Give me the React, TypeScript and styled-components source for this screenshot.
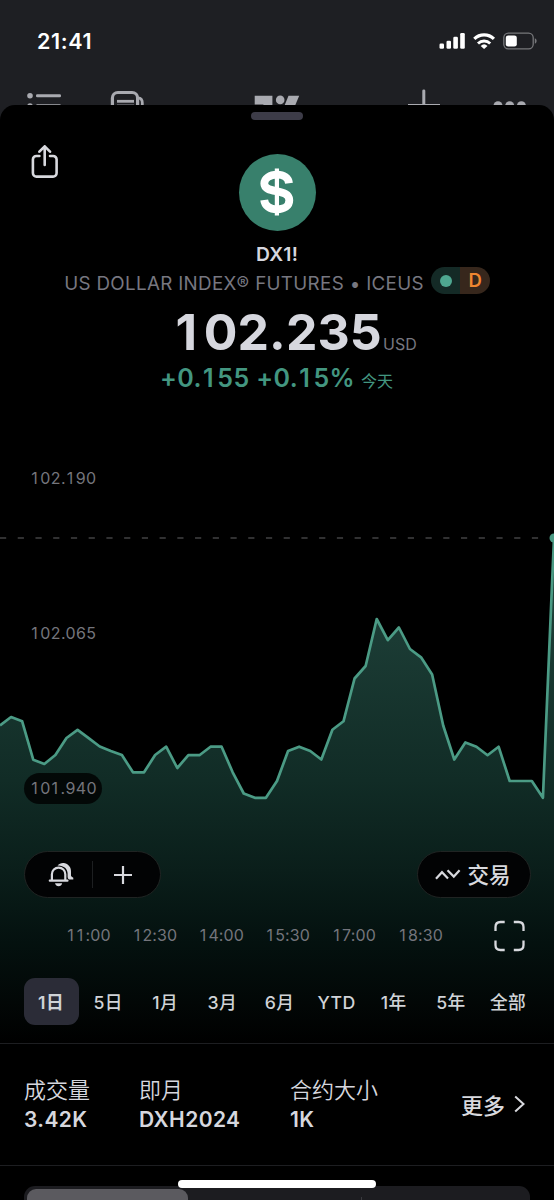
import React from "react";
import styled, { createGlobalStyle, css } from "styled-components";

const GlobalStyle = createGlobalStyle`
  * { box-sizing: border-box; }
  html, body { margin: 0; padding: 0; background: #1e1f23; }
  body {
    font-family: Inter, "Noto Sans CJK SC", sans-serif;
    -webkit-font-smoothing: antialiased;
    color: #d6d7de;
  }
`;

const Screen = styled.main`
  display: flex;
  flex-direction: column;
  width: 554px;
  height: 1200px;
  position: relative;
  overflow: hidden;
  background: #1e1f23;
`;

const StatusBar = styled.header`
  display: flex;
  align-items: center;
  justify-content: space-between;
  height: 82px;
  flex: none;
  padding: 0 17px 0 37px;
`;

const Clock = styled.time`
  color: #fff;
  font-size: 21.5px;
  font-weight: 600;
  line-height: 26px;
  letter-spacing: 0.6px;
`;

const BackToolbar = styled.nav`
  height: 23px;
  flex: none;
`;

const Sheet = styled.section`
  display: flex;
  flex-direction: column;
  flex: 1;
  min-height: 0;
  overflow: hidden;
  background: #000;
  border-radius: 15px 15px 0 0;
`;

const Grabber = styled.div`
  width: 52px;
  height: 8px;
  flex: none;
  margin: 7px auto 0;
  border-radius: 4px;
  background: #3d3c48;
`;

const HeroTop = styled.div`
  display: grid;
  grid-template-columns: 1fr 77px 1fr;
  align-items: start;
  height: 86px;
  flex: none;
  margin-top: 25px;
  padding: 0 30px;
`;

const IconButton = styled.button`
  display: flex;
  align-items: center;
  justify-content: center;
  padding: 0;
  border: 0;
  background: none;
  color: #d8d9de;
  justify-self: start;
`;

const Logo = styled.div`
  display: flex;
  align-items: center;
  justify-content: center;
  width: 77px;
  height: 77px;
  margin-top: 8.5px;
  border-radius: 50%;
  background: #38806c;
`;

const Symbol = styled.h1`
  flex: none;
  margin: 11px 0 0;
  font-size: 19.3px;
  font-weight: 600;
  line-height: 24px;
  text-align: center;
  letter-spacing: 0.2px;
`;

const NameRow = styled.div`
  display: flex;
  align-items: flex-start;
  justify-content: center;
  gap: 7px;
  height: 28px;
  flex: none;
  padding-top: 1px;
  color: #777780;
  font-size: 18.8px;
  line-height: 34px;
  white-space: nowrap;
`;

const Name = styled.span`
  letter-spacing: 0.33px;
`;

const StatusBadge = styled.span`
  display: flex;
  width: 59px;
  height: 27px;
  border-radius: 14px;
  overflow: hidden;
`;

const BadgeHalf = styled.span<{ $bg: string }>`
  display: flex;
  align-items: center;
  justify-content: center;
  flex: 1;
  background: ${(p) => p.$bg};
  color: #ef8630;
  font-size: 18.5px;
  font-weight: 600;
  line-height: 27px;
`;

const MarketDot = styled.i`
  width: 12px;
  height: 12px;
  border-radius: 50%;
  background: #4ea790;
`;

const One = styled.span`
  padding: 0 0.13em 0 0.05em;
`;

const PriceRow = styled.div`
  display: flex;
  align-items: baseline;
  height: 70px;
  flex: none;
  padding: 8px 0 0 173px;
`;

const Price = styled.strong`
  width: 210px;
  font-size: 50px;
  font-weight: 650;
  line-height: 60px;
  letter-spacing: 0.1px;
`;

const Currency = styled.span`
  color: #777780;
  font-size: 16px;
  letter-spacing: 0;
`;

const ChangeRow = styled.div`
  display: flex;
  align-items: baseline;
  height: 28px;
  flex: none;
  padding-left: 160px;
  color: #439680;
`;

const Change = styled.span`
  width: 201px;
  font-size: 25px;
  font-weight: 640;
  line-height: 28px;
  letter-spacing: 0.4px;
  white-space: nowrap;
`;

const Today = styled.span`
  font-size: 16px;
`;

const ChartPanel = styled.section`
  display: grid;
  height: 652px;
  flex: none;
  border-bottom: 1px solid #1d1e21;

  > * { grid-area: 1 / 1; }
`;

const ChartControls = styled.div`
  display: flex;
  flex-direction: column;
  min-width: 0;
  padding: 71px 23.5px 0;
`;

const Scale = styled.div`
  display: flex;
  flex-direction: column;
  align-items: flex-start;
  gap: 124px;
`;

const ScaleLabel = styled.span<{ $filled?: boolean }>`
  width: 78px;
  height: 31px;
  border-radius: 16px;
  padding-left: 7px;
  font-size: 16px;
  line-height: 31px;
  letter-spacing: 0.4px;
  color: #74757c;
  background: ${(p) => (p.$filled ? "rgba(0, 0, 0, 0.8)" : "transparent")};
`;

const ActionRow = styled.div`
  display: flex;
  justify-content: space-between;
  margin-top: 47px;
`;

const Pill = styled.div<{ $width: number; $inset: number }>`
  display: flex;
  align-items: center;
  width: ${(p) => p.$width}px;
  height: 47px;
  padding: 0 ${(p) => p.$inset}px;
  border: 1px solid #202423;
  border-radius: 24px;
  background: #020304;
  color: #d8d9de;
`;

const PillButton = styled.button`
  display: flex;
  align-items: center;
  justify-content: center;
  flex: 1;
  padding: 0;
  border: 0;
  background: none;
  color: inherit;
  font: 500 21.5px/45px Inter, "Noto Sans CJK SC", sans-serif;
`;

const TradeLabel = styled.span`
  padding: 1px 1px 0 0;
`;

const PillDivider = styled.i`
  width: 1px;
  height: 27px;
  background: #1d1f21;
`;

const TimeRow = styled.div`
  display: flex;
  align-items: center;
  justify-content: space-between;
  height: 32px;
  margin-top: 22px;
  padding: 0 6px 0 32px;
`;

const Times = styled.div`
  display: grid;
  grid-template-columns: repeat(6, 66.4px);
  color: #74757c;
  font-size: 16px;
  letter-spacing: 0.15px;
  line-height: 20px;
  padding-bottom: 2px;
  text-align: center;
`;

const Ranges = styled.div`
  display: flex;
  justify-content: space-between;
  width: 512px;
  margin-top: 26px;
`;

const Range = styled.button<{ $active?: boolean }>`
  width: 55px;
  height: 47px;
  padding: 0;
  border: 0;
  border-radius: 11px;
  background: none;
  color: #d0d3d7;
  font: 450 17.7px/49px Inter, "Noto Sans CJK SC", sans-serif;
  letter-spacing: 0.4px;
  white-space: nowrap;
  ${(p) =>
    p.$active &&
    css`
      background: #2b2c37;
      font-weight: 600;
    `}
`;

const Stats = styled.section`
  display: grid;
  grid-template-columns: 115px 151px 1fr auto;
  height: 122px;
  flex: none;
  padding: 31px 29px 0 24px;
  border-bottom: 1px solid #1d1e21;
`;

const StatLabel = styled.div`
  font-size: 22px;
  font-weight: 350;
  line-height: 30px;
`;

const StatValue = styled.div`
  font-size: 21px;
  font-weight: 600;
  line-height: 30px;
  letter-spacing: 0.4px;
`;

const More = styled.button`
  display: flex;
  align-items: center;
  gap: 9px;
  height: 58px;
  padding: 0;
  border: 0;
  background: none;
  color: #d8d9de;
  font: 500 22px/57px "Noto Sans CJK SC", sans-serif;
`;

const Segments = styled.div`
  display: flex;
  justify-content: space-between;
  height: 40px;
  flex: none;
  margin: 20px 24px 0;
  padding: 3px;
  border-radius: 11px;
  background: #1c1c20;
`;

const Segment = styled.div`
  width: 161px;
  border-radius: 9px;
  background: #5b5a5f;
`;

const SegmentDivider = styled.i`
  width: 1px;
  height: 20px;
  margin: 8px 165px 0 0;
  background: #3a3a3f;
`;

const HomeIndicator = styled.div`
  position: absolute;
  left: 178px;
  top: 1180px;
  width: 198px;
  height: 8px;
  border-radius: 4px;
  background: #fff;
`;

const prices = [
  725.5, 717, 721.3, 759.7, 764, 755, 738, 729.8, 738.2, 746.5, 751, 755, 772.3,
  772.3, 755, 746.7, 768, 755.2, 755.2, 746.7, 746.7, 772.3, 793.5, 797.8, 797.8,
  781, 751, 746.7, 751, 759.5, 729.8, 721.3, 678.5, 666, 619, 640.2, 627.5, 649,
  657.3, 674.5, 725.5, 759.5, 742.5, 746.7, 755.2, 746.7, 781, 781, 781, 797.8, 538,
];
const line = prices.map((y, i) => `${(i * 11.08).toFixed(2)},${y - 392}`).join(" ");

/* Gives the narrow "1" the same advance as the other digits. */
const Digits = ({ children }: { children: string }) => (
  <>
    {children.split(/(1)/).map((part, i) => (part === "1" ? <One key={i}>1</One> : part))}
  </>
);

const StatusIcons = () => (
  <svg width="98" height="18" viewBox="439 31.5 98 18" fill="#fff">
    <rect x="439.5" y="43" width="4.5" height="5.3" rx="1.3" />
    <rect x="446.5" y="40.3" width="4.5" height="8" rx="1.3" />
    <rect x="453.3" y="36.3" width="4.6" height="12" rx="1.3" />
    <rect x="460.2" y="32.4" width="4.6" height="15.9" rx="1.3" />
    <path d="M474.3 38.3a14 14 0 0 1 19.6 0" fill="none" stroke="#fff" strokeWidth="3.2" />
    <path d="M478 43a8.8 8.8 0 0 1 12.2 0" fill="none" stroke="#fff" strokeWidth="2.9" />
    <path d="M480.7 45.4a5 5 0 0 1 6.8 0L484.1 48.6z" />
    <rect x="503.8" y="32.7" width="29.4" height="15.6" rx="4.6" fill="none" stroke="#77787b" strokeWidth="1.3" />
    <rect x="505.8" y="34.9" width="11" height="11.2" rx="2.4" />
    <path d="M534.8 37.8c2.4.8 2.4 4.6 0 5.4z" fill="#77787b" />
  </svg>
);

const ToolbarIcons = () => (
  <svg width="554" height="23" viewBox="0 82 554 23" fill="#a9aab0">
    <circle cx="30" cy="95.7" r="2.8" />
    <rect x="36" y="94.2" width="25" height="3" rx="1.3" />
    <circle cx="30" cy="106" r="2.8" />
    <rect x="36" y="104.2" width="25" height="3" rx="1.3" />
    <g fill="none" stroke="#a9aab0">
      <path d="M112.4 106v-8a5.5 5.5 0 0 1 5.5-5.5h14.2a5.5 5.5 0 0 1 5.5 5.5v8" strokeWidth="3.2" />
      <path d="M138 97.8c3 .2 4.3 2 4.3 5v3" strokeWidth="2.8" />
      <path d="M117 101.3h17" strokeWidth="2.8" />
      <path d="M117 105.8h17" strokeWidth="2.4" />
    </g>
    <path d="M254.7 95.8h17.7V110h-9v-5.5h-8.7z" />
    <circle cx="280.2" cy="99.9" r="4.3" />
    <path d="M288.5 95.8h10.7L294.5 107h-10.6z" />
    <path d="M422.3 90.7q0-1.3 1.5-1.3t1.5 1.3V104H440v3h-32v-3h14.3z" />
    <circle cx="498" cy="105.7" r="4.5" />
    <circle cx="509.7" cy="105.7" r="4.5" />
    <circle cx="521.4" cy="105.7" r="4.5" />
  </svg>
);

const ShareIcon = () => (
  <svg width="30" height="34" viewBox="0 0 30 34" fill="none" stroke="currentColor" strokeWidth="2.6" strokeLinecap="round" strokeLinejoin="round">
    <path d="M9.4 11H6.4a3.5 3.5 0 0 0-3.5 3.5V28a3.6 3.6 0 0 0 3.6 3.6H23a3.6 3.6 0 0 0 3.6-3.6V14.5a3.5 3.5 0 0 0-3.5-3.5H20" />
    <path d="M14.7 20V1.7M9.4 6.7l5.3-5.4 5.3 5.4" />
  </svg>
);

const DollarIcon = () => (
  <svg width="36" height="48" viewBox="0 0 36 48" fill="none" stroke="#fff">
    <path d="M17.9 .5v47" strokeWidth="4.2" />
    <path d="M30 15.2C29.4 10 25 6.7 18 6.7S5.3 10.2 5.3 15.6C5.3 26.4 30.3 19.8 30.3 32.2 30.3 38 25.3 41.3 18 41.3S5.800 37.800 5.200 32" strokeWidth="7.800" />
  </svg>
);

const BellIcon = () => (
  <svg width="26" height="25" viewBox="0 0 26 25" fill="currentColor">
    <path d="M3.9 17.5V12.3a6.7 6.7 0 0 1 13.4 0v5.2q0 1 2.2 1.2H1.8q2.1-.2 2.1-1.2z" fill="none" stroke="currentColor" strokeWidth="2.2" strokeLinejoin="round" />
    <path d="M7 21.3h7.2q-.8 3-3.6 3T7 21.3z" />
    <path d="M9.5 3.6C11.3 1.3 14.3.5 17 1.3c4 1.2 6 4.5 6 8.4v4q.3 1.2 2.3 2v1.9h-4.2q-1.5-1-1.5-2.7v-3.3c0-4.5-3.700-8.200-10.100-8z" />
  </svg>
);

const Chart = () => (
  <svg width="554" height="651" viewBox="0 0 554 651">
    <defs>
      <linearGradient id="area" gradientUnits="userSpaceOnUse" x1="0" y1="146" x2="0" y2="651">
        <stop offset="0" stopColor="#22493f" />
        <stop offset="0.2" stopColor="#1b3b34" />
        <stop offset="0.48" stopColor="#112c26" />
        <stop offset="0.66" stopColor="#0a1e1a" />
        <stop offset="0.8" stopColor="#04110f" />
        <stop offset="0.92" stopColor="#020706" />
        <stop offset="1" stopColor="#000000" />
      </linearGradient>
    </defs>
    <polygon points={`0,651 ${line} 554,651`} fill="url(#area)" />
    <path d="M0 146h545" stroke="#414143" strokeWidth="1.6" strokeDasharray="6.2 11.53" />
    <polyline points={line} fill="none" stroke="#4b9b85" strokeWidth="2.7" strokeLinejoin="round" />
    <circle cx="554" cy="146" r="4.5" fill="#4b9b85" />
  </svg>
);

const TradeIcon = styled.svg`
  margin-right: 6px;
`;

const times = ["11:00", "12:30", "14:00", "15:30", "17:00", "18:30"];
const ranges = ["1日", "5日", "1月", "3月", "6月", "YTD", "1年", "5年", "全部"];
const stats = [
  ["成交量", "3.42K"],
  ["即月", "DXH2024"],
  ["合约大小", "1K"],
];

export default function App() {
  return (
    <Screen>
      <GlobalStyle />
      <StatusBar>
        <Clock>21:41</Clock>
        <StatusIcons />
      </StatusBar>
      <BackToolbar>
        <ToolbarIcons />
      </BackToolbar>
      <Sheet>
        <Grabber />
        <HeroTop>
          <IconButton aria-label="Share">
            <ShareIcon />
          </IconButton>
          <Logo>
            <DollarIcon />
          </Logo>
        </HeroTop>
        <Symbol>DX1!</Symbol>
        <NameRow>
          <Name>US DOLLAR INDEX® FUTURES • ICEUS</Name>
          <StatusBadge>
            <BadgeHalf $bg="#142a26">
              <MarketDot />
            </BadgeHalf>
            <BadgeHalf $bg="#37271c">D</BadgeHalf>
          </StatusBadge>
        </NameRow>
        <PriceRow>
          <Price>
            <Digits>102.235</Digits>
          </Price>
          <Currency>USD</Currency>
        </PriceRow>
        <ChangeRow>
          <Change>
            <Digits>+0.155 +0.15%</Digits>
          </Change>
          <Today>今天</Today>
        </ChangeRow>
        <ChartPanel>
          <Chart />
          <ChartControls>
            <Scale>
              <ScaleLabel>
                <Digits>102.190</Digits>
              </ScaleLabel>
              <ScaleLabel>
                <Digits>102.065</Digits>
              </ScaleLabel>
              <ScaleLabel $filled>
                <Digits>101.940</Digits>
              </ScaleLabel>
            </Scale>
            <ActionRow>
              <Pill $width={137} $inset={6}>
                <PillButton aria-label="Alerts">
                  <BellIcon />
                </PillButton>
                <PillDivider />
                <PillButton aria-label="Add">
                  <svg width="18" height="18" viewBox="0 0 18 18" stroke="currentColor" strokeWidth="2.2">
                    <path d="M9 0v18M0 9h18" />
                  </svg>
                </PillButton>
              </Pill>
              <Pill $width={114} $inset={0}>
                <PillButton>
                  <TradeIcon width="26" height="12" viewBox="0 0 26 12" fill="none" stroke="currentColor" strokeWidth="2.2">
                    <path d="M1 9.8 7 3.2l6 6.2M12.5 1.3l6.3 6.3 5.8-6.3" />
                  </TradeIcon>
                  <TradeLabel>交易</TradeLabel>
                </PillButton>
              </Pill>
            </ActionRow>
            <TimeRow>
              <Times>
                {times.map((t) => (
                  <span key={t}>
                    <Digits>{t}</Digits>
                  </span>
                ))}
              </Times>
              <IconButton aria-label="Full screen">
                <svg width="31" height="32" viewBox="0 0 31 32" fill="none" stroke="currentColor" strokeWidth="2.3">
                  <path d="M1.5 11V7q0-5 5-5h4.2M19.8 2H24.5q5 0 5 5v4M29.5 20.5V25q0 5-5 5h-4.7M10.7 30H6.5q-5 0-5-5v-4.5" />
                </svg>
              </IconButton>
            </TimeRow>
            <Ranges>
              {ranges.map((r, i) => (
                <Range key={r} $active={i === 0}>
                  {r}
                </Range>
              ))}
            </Ranges>
          </ChartControls>
        </ChartPanel>
        <Stats>
          {stats.map(([label, value]) => (
            <div key={label}>
              <StatLabel>{label}</StatLabel>
              <StatValue>{value}</StatValue>
            </div>
          ))}
          <More>
            更多
            <svg width="11" height="18" viewBox="0 0 11 18" fill="none" stroke="currentColor" strokeWidth="2">
              <path d="m1.2 1.5 8.3 7.5-8.3 7.5" />
            </svg>
          </More>
        </Stats>
        <Segments>
          <Segment />
          <SegmentDivider />
        </Segments>
      </Sheet>
      <HomeIndicator />
    </Screen>
  );
}
